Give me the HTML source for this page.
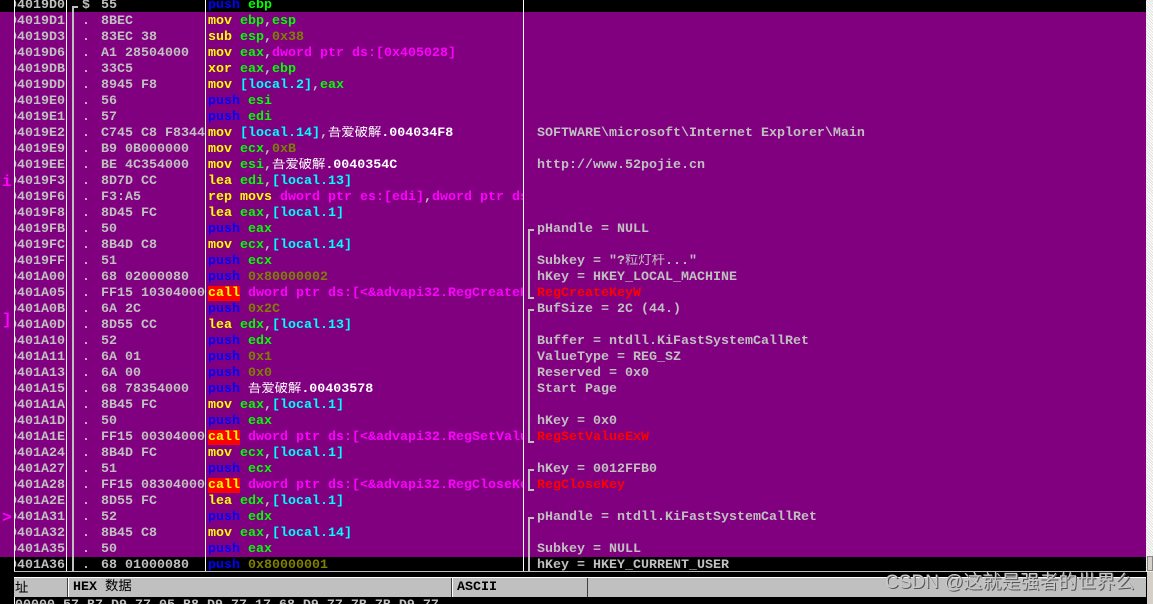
<!DOCTYPE html>
<html><head><meta charset="utf-8"><style>
*{margin:0;padding:0;box-sizing:border-box}
html,body{width:1153px;height:604px;overflow:hidden}
body{background:#800080;position:relative;font-family:"Liberation Mono","WenQuanYi Zen Hei",monospace;font-size:13.33px;font-weight:bold;line-height:16px;color:#c0c0c0}
.r{position:absolute;left:0;width:1146px;height:16px;white-space:pre}
.blk{background:#000}
.c{position:absolute;top:0;height:16px;overflow:hidden;white-space:pre}
.a{left:14px;width:51px}
.a span{position:relative;left:-13px}
.d{left:82px;width:10px}
.h{left:101px;width:104px}
.s{left:208px;width:315px}
.m{left:537px;width:600px}
.vl{position:absolute;top:0;width:1px;background:#fff;height:572px}
.pu{color:#0000ff}.mv{color:#ffff00}.g{color:#00ff00}.o{color:#808000}.mg{color:#ff00ff}.cy{color:#00ffff}.w{color:#fff;font-weight:normal}.wb{color:#fff}
.call{background:#ff0000;color:#ffff00}
.red{color:#ff0000}
.br{position:absolute;left:528px;width:6px;border-left:2px solid #c0c0c0}
.mk{position:absolute;left:2px;color:#ff00ff;font-size:16px}
</style></head><body>
<div style="position:absolute;left:1146px;top:0;width:7px;height:572px;background:repeating-linear-gradient(45deg,#e0e0e0 0 1px,#fff 1px 2px)"></div>
<div style="position:absolute;left:1147px;top:556px;width:6px;height:15px;background:#d4d0c8;border:1px solid #888"></div>

<div class="r blk" style="top:-3px;height:15px"></div>
<div class="r" style="top:-2px"><div class="c a"><span>004019D0</span></div><div class="c d">$</div><div class="c h">55</div><div class="c s"><span class="pu">push</span> <span class="g">ebp</span></div></div>
<div class="r" style="top:14px"><div class="c a"><span>004019D1</span></div><div class="c d">.</div><div class="c h">8BEC</div><div class="c s"><span class="mv">mov</span> <span class="g">ebp</span>,<span class="g">esp</span></div></div>
<div class="r" style="top:30px"><div class="c a"><span>004019D3</span></div><div class="c d">.</div><div class="c h">83EC 38</div><div class="c s"><span class="mv">sub</span> <span class="g">esp</span>,<span class="o">0x38</span></div></div>
<div class="r" style="top:46px"><div class="c a"><span>004019D6</span></div><div class="c d">.</div><div class="c h">A1 28504000</div><div class="c s"><span class="mv">mov</span> <span class="g">eax</span>,<span class="mg">dword ptr ds:[0x405028]</span></div></div>
<div class="r" style="top:62px"><div class="c a"><span>004019DB</span></div><div class="c d">.</div><div class="c h">33C5</div><div class="c s"><span class="mv">xor</span> <span class="g">eax</span>,<span class="g">ebp</span></div></div>
<div class="r" style="top:78px"><div class="c a"><span>004019DD</span></div><div class="c d">.</div><div class="c h">8945 F8</div><div class="c s"><span class="mv">mov</span> <span class="cy">[local.2]</span>,<span class="g">eax</span></div></div>
<div class="r" style="top:94px"><div class="c a"><span>004019E0</span></div><div class="c d">.</div><div class="c h">56</div><div class="c s"><span class="pu">push</span> <span class="g">esi</span></div></div>
<div class="r" style="top:110px"><div class="c a"><span>004019E1</span></div><div class="c d">.</div><div class="c h">57</div><div class="c s"><span class="pu">push</span> <span class="g">edi</span></div></div>
<div class="r" style="top:126px"><div class="c a"><span>004019E2</span></div><div class="c d">.</div><div class="c h">C745 C8 F8344000</div><div class="c s"><span class="mv">mov</span> <span class="cy">[local.14]</span>,<span class="w">吾爱破解</span><span class="wb">.004034F8</span></div><div class="c m">SOFTWARE\microsoft\Internet Explorer\Main</div></div>
<div class="r" style="top:142px"><div class="c a"><span>004019E9</span></div><div class="c d">.</div><div class="c h">B9 0B000000</div><div class="c s"><span class="mv">mov</span> <span class="g">ecx</span>,<span class="o">0xB</span></div></div>
<div class="r" style="top:158px"><div class="c a"><span>004019EE</span></div><div class="c d">.</div><div class="c h">BE 4C354000</div><div class="c s"><span class="mv">mov</span> <span class="g">esi</span>,<span class="w">吾爱破解</span><span class="wb">.0040354C</span></div><div class="c m">http://www.52pojie.cn</div></div>
<div class="r" style="top:174px"><div class="c a"><span>004019F3</span></div><div class="c d">.</div><div class="c h">8D7D CC</div><div class="c s"><span class="mv">lea</span> <span class="g">edi</span>,<span class="cy">[local.13]</span></div></div>
<div class="r" style="top:190px"><div class="c a"><span>004019F6</span></div><div class="c d">.</div><div class="c h">F3:A5</div><div class="c s"><span class="mv">rep movs</span> <span class="mg">dword ptr es:[edi]</span>,<span class="mg">dword ptr ds:[esi]</span></div></div>
<div class="r" style="top:206px"><div class="c a"><span>004019F8</span></div><div class="c d">.</div><div class="c h">8D45 FC</div><div class="c s"><span class="mv">lea</span> <span class="g">eax</span>,<span class="cy">[local.1]</span></div></div>
<div class="r" style="top:222px"><div class="c a"><span>004019FB</span></div><div class="c d">.</div><div class="c h">50</div><div class="c s"><span class="pu">push</span> <span class="g">eax</span></div><div class="c m">pHandle = NULL</div></div>
<div class="r" style="top:238px"><div class="c a"><span>004019FC</span></div><div class="c d">.</div><div class="c h">8B4D C8</div><div class="c s"><span class="mv">mov</span> <span class="g">ecx</span>,<span class="cy">[local.14]</span></div></div>
<div class="r" style="top:254px"><div class="c a"><span>004019FF</span></div><div class="c d">.</div><div class="c h">51</div><div class="c s"><span class="pu">push</span> <span class="g">ecx</span></div><div class="c m">Subkey = "?<span style="font-weight:normal">粒灯杆</span>..."</div></div>
<div class="r" style="top:270px"><div class="c a"><span>00401A00</span></div><div class="c d">.</div><div class="c h">68 02000080</div><div class="c s"><span class="pu">push</span> <span class="o">0x80000002</span></div><div class="c m">hKey = HKEY_LOCAL_MACHINE</div></div>
<div class="r" style="top:286px"><div class="c a"><span>00401A05</span></div><div class="c d">.</div><div class="c h">FF15 10304000</div><div class="c s"><span class="call">call</span> <span class="mg">dword ptr ds:[&lt;&amp;advapi32.RegCreateKeyW&gt;]</span></div><div class="c m red">RegCreateKeyW</div></div>
<div class="r" style="top:302px"><div class="c a"><span>00401A0B</span></div><div class="c d">.</div><div class="c h">6A 2C</div><div class="c s"><span class="pu">push</span> <span class="o">0x2C</span></div><div class="c m">BufSize = 2C (44.)</div></div>
<div class="r" style="top:318px"><div class="c a"><span>00401A0D</span></div><div class="c d">.</div><div class="c h">8D55 CC</div><div class="c s"><span class="mv">lea</span> <span class="g">edx</span>,<span class="cy">[local.13]</span></div></div>
<div class="r" style="top:334px"><div class="c a"><span>00401A10</span></div><div class="c d">.</div><div class="c h">52</div><div class="c s"><span class="pu">push</span> <span class="g">edx</span></div><div class="c m">Buffer = ntdll.KiFastSystemCallRet</div></div>
<div class="r" style="top:350px"><div class="c a"><span>00401A11</span></div><div class="c d">.</div><div class="c h">6A 01</div><div class="c s"><span class="pu">push</span> <span class="o">0x1</span></div><div class="c m">ValueType = REG_SZ</div></div>
<div class="r" style="top:366px"><div class="c a"><span>00401A13</span></div><div class="c d">.</div><div class="c h">6A 00</div><div class="c s"><span class="pu">push</span> <span class="o">0x0</span></div><div class="c m">Reserved = 0x0</div></div>
<div class="r" style="top:382px"><div class="c a"><span>00401A15</span></div><div class="c d">.</div><div class="c h">68 78354000</div><div class="c s"><span class="pu">push</span> <span class="w">吾爱破解</span><span class="wb">.00403578</span></div><div class="c m">Start Page</div></div>
<div class="r" style="top:398px"><div class="c a"><span>00401A1A</span></div><div class="c d">.</div><div class="c h">8B45 FC</div><div class="c s"><span class="mv">mov</span> <span class="g">eax</span>,<span class="cy">[local.1]</span></div></div>
<div class="r" style="top:414px"><div class="c a"><span>00401A1D</span></div><div class="c d">.</div><div class="c h">50</div><div class="c s"><span class="pu">push</span> <span class="g">eax</span></div><div class="c m">hKey = 0x0</div></div>
<div class="r" style="top:430px"><div class="c a"><span>00401A1E</span></div><div class="c d">.</div><div class="c h">FF15 00304000</div><div class="c s"><span class="call">call</span> <span class="mg">dword ptr ds:[&lt;&amp;advapi32.RegSetValueExW&gt;]</span></div><div class="c m red">RegSetValueExW</div></div>
<div class="r" style="top:446px"><div class="c a"><span>00401A24</span></div><div class="c d">.</div><div class="c h">8B4D FC</div><div class="c s"><span class="mv">mov</span> <span class="g">ecx</span>,<span class="cy">[local.1]</span></div></div>
<div class="r" style="top:462px"><div class="c a"><span>00401A27</span></div><div class="c d">.</div><div class="c h">51</div><div class="c s"><span class="pu">push</span> <span class="g">ecx</span></div><div class="c m">hKey = 0012FFB0</div></div>
<div class="r" style="top:478px"><div class="c a"><span>00401A28</span></div><div class="c d">.</div><div class="c h">FF15 08304000</div><div class="c s"><span class="call">call</span> <span class="mg">dword ptr ds:[&lt;&amp;advapi32.RegCloseKey&gt;]</span></div><div class="c m red">RegCloseKey</div></div>
<div class="r" style="top:494px"><div class="c a"><span>00401A2E</span></div><div class="c d">.</div><div class="c h">8D55 FC</div><div class="c s"><span class="mv">lea</span> <span class="g">edx</span>,<span class="cy">[local.1]</span></div></div>
<div class="r" style="top:510px"><div class="c a"><span>00401A31</span></div><div class="c d">.</div><div class="c h">52</div><div class="c s"><span class="pu">push</span> <span class="g">edx</span></div><div class="c m">pHandle = ntdll.KiFastSystemCallRet</div></div>
<div class="r" style="top:526px"><div class="c a"><span>00401A32</span></div><div class="c d">.</div><div class="c h">8B45 C8</div><div class="c s"><span class="mv">mov</span> <span class="g">eax</span>,<span class="cy">[local.14]</span></div></div>
<div class="r" style="top:542px"><div class="c a"><span>00401A35</span></div><div class="c d">.</div><div class="c h">50</div><div class="c s"><span class="pu">push</span> <span class="g">eax</span></div><div class="c m">Subkey = NULL</div></div>
<div class="r blk" style="top:557px;height:15px"><div class="c a" style="top:1px"><span>00401A36</span></div><div class="c d" style="top:1px">.</div><div class="c h" style="top:1px">68 01000080</div><div class="c s" style="top:1px"><span class="pu">push</span> <span class="o">0x80000001</span></div><div class="c m" style="top:1px">hKey = HKEY_CURRENT_USER</div></div>

<div class="vl" style="left:14px"></div>
<div class="vl" style="left:66px"></div>
<div class="vl" style="left:205px"></div>
<div class="vl" style="left:523px"></div>
<div style="position:absolute;left:72px;top:6px;width:6px;height:566px;border-left:2px solid #c0c0c0;border-top:2px solid #c0c0c0"></div>

<div class="br" style="top:229px;height:70px;border-top:2px solid #c0c0c0;border-bottom:2px solid #c0c0c0"></div>
<div class="br" style="top:309px;height:134px;border-top:2px solid #c0c0c0;border-bottom:2px solid #c0c0c0"></div>
<div class="br" style="top:469px;height:22px;border-top:2px solid #c0c0c0;border-bottom:2px solid #c0c0c0"></div>
<div class="br" style="top:517px;height:55px;border-top:2px solid #c0c0c0"></div>

<div class="mk" style="top:174px">i</div>
<div class="mk" style="top:312px">]</div>
<div class="mk" style="top:510px">&gt;</div>

<div style="position:absolute;left:0;top:572px;width:1153px;height:32px;background:#000"></div>
<div style="position:absolute;left:14px;top:571px;width:1132px;height:1px;background:#c0c0c0"></div>
<div style="position:absolute;left:14px;top:577px;width:1132px;height:20px;background:#c0c0c0;border-top:1px solid #fff"></div>
<div style="position:absolute;left:14px;top:578px;width:54px;height:19px;border-right:1px solid #404040;color:#000;font-weight:normal;padding-left:1px;line-height:19px;font-family:'WenQuanYi Zen Hei',sans-serif">址</div>
<div style="position:absolute;left:68px;top:578px;width:384px;height:19px;border-left:1px solid #fff;border-right:1px solid #404040;color:#000;padding-left:4px;line-height:19px">HEX <span style="font-weight:normal">数据</span></div>
<div style="position:absolute;left:452px;top:578px;width:136px;height:19px;border-left:1px solid #fff;border-right:1px solid #404040;color:#000;padding-left:4px;line-height:19px">ASCII</div>
<div style="position:absolute;left:14px;top:597px;width:1px;height:7px;background:#fff"></div>
<div style="position:absolute;left:15px;top:598px;white-space:pre;color:#c0c0c0;line-height:16px">00000 57 B7 D9 77 05 B8 D9 77 17 68 D9 77 7B 7B D9 77</div>

<div style="position:absolute;left:885px;top:571px;font-family:'Liberation Sans','WenQuanYi Zen Hei',sans-serif;font-size:19px;font-weight:normal;color:#c8c8c8;text-shadow:1px 1px 0 #555;line-height:24px;white-space:nowrap">CSDN @这就是强者的世界么</div>
<div style="position:absolute;left:1147px;top:572px;width:6px;height:32px;background:#d4d0c8"></div>
</body></html>
